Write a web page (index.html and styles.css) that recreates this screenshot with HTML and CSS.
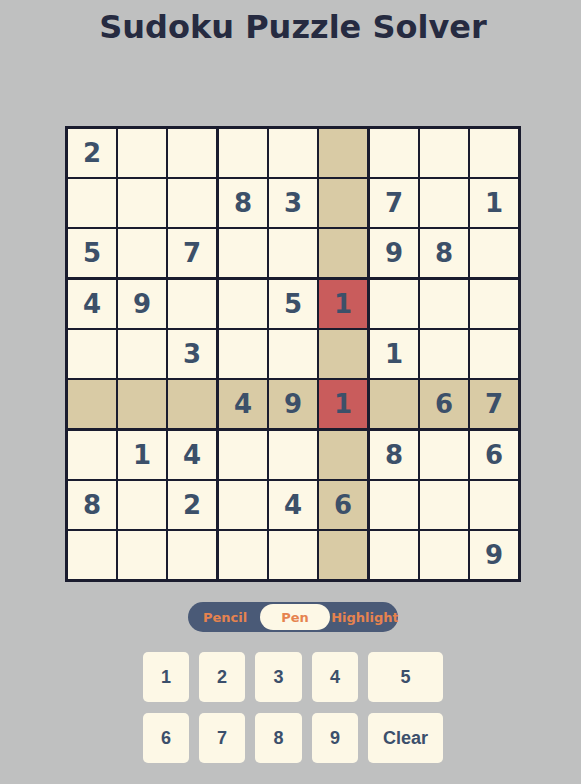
FILE: index.html
```html
<!DOCTYPE html>
<html>
<head>
<meta charset="utf-8">
<link rel="stylesheet" href="styles.css">
</head>
<body>
<div class="page">
  <h1 class="title">Sudoku Puzzle Solver</h1>
  <div class="board">
    <div class="box">
      <div class="cell">2</div><div class="cell"></div><div class="cell"></div>
      <div class="cell"></div><div class="cell"></div><div class="cell"></div>
      <div class="cell">5</div><div class="cell"></div><div class="cell">7</div>
    </div>
    <div class="box">
      <div class="cell"></div><div class="cell"></div><div class="cell hl"></div>
      <div class="cell">8</div><div class="cell">3</div><div class="cell hl"></div>
      <div class="cell"></div><div class="cell"></div><div class="cell hl"></div>
    </div>
    <div class="box">
      <div class="cell"></div><div class="cell"></div><div class="cell"></div>
      <div class="cell">7</div><div class="cell"></div><div class="cell">1</div>
      <div class="cell">9</div><div class="cell">8</div><div class="cell"></div>
    </div>
    <div class="box">
      <div class="cell">4</div><div class="cell">9</div><div class="cell"></div>
      <div class="cell"></div><div class="cell"></div><div class="cell">3</div>
      <div class="cell hl"></div><div class="cell hl"></div><div class="cell hl"></div>
    </div>
    <div class="box">
      <div class="cell"></div><div class="cell">5</div><div class="cell err">1</div>
      <div class="cell"></div><div class="cell"></div><div class="cell hl"></div>
      <div class="cell hl">4</div><div class="cell hl">9</div><div class="cell err">1</div>
    </div>
    <div class="box">
      <div class="cell"></div><div class="cell"></div><div class="cell"></div>
      <div class="cell">1</div><div class="cell"></div><div class="cell"></div>
      <div class="cell hl"></div><div class="cell hl">6</div><div class="cell hl">7</div>
    </div>
    <div class="box">
      <div class="cell"></div><div class="cell">1</div><div class="cell">4</div>
      <div class="cell">8</div><div class="cell"></div><div class="cell">2</div>
      <div class="cell"></div><div class="cell"></div><div class="cell"></div>
    </div>
    <div class="box">
      <div class="cell"></div><div class="cell"></div><div class="cell hl"></div>
      <div class="cell"></div><div class="cell">4</div><div class="cell hl">6</div>
      <div class="cell"></div><div class="cell"></div><div class="cell hl"></div>
    </div>
    <div class="box">
      <div class="cell">8</div><div class="cell"></div><div class="cell">6</div>
      <div class="cell"></div><div class="cell"></div><div class="cell"></div>
      <div class="cell"></div><div class="cell"></div><div class="cell">9</div>
    </div>
  </div>
  <div class="modes">
    <span class="mode">Pencil</span>
    <span class="mode active">Pen</span>
    <span class="mode">Highlight</span>
  </div>
  <div class="pad">
    <button class="key">1</button>
    <button class="key">2</button>
    <button class="key">3</button>
    <button class="key">4</button>
    <button class="key">5</button>
    <button class="key">6</button>
    <button class="key">7</button>
    <button class="key">8</button>
    <button class="key">9</button>
    <button class="key">Clear</button>
  </div>
</div>
</body>
</html>
```
FILE: styles.css
```css
html, body {
  margin: 0;
  padding: 0;
  background: #bfc0c0;
}
.page {
  width: 581px;
  box-sizing: border-box;
  padding-left: 5px;
  display: flex;
  flex-direction: column;
  align-items: center;
}
.title {
  margin: 7px 0 0;
  font-family: "DejaVu Sans", Verdana, sans-serif;
  font-weight: bold;
  font-size: 32px;
  line-height: 40px;
  color: #262b41;
}
.board {
  margin-top: 79px;
  display: grid;
  grid-template-columns: repeat(3, 148px);
  gap: 3px;
  padding: 3px;
  background: #1a1c2e;
}
.box {
  display: grid;
  grid-template-columns: repeat(3, 48px);
  grid-auto-rows: 48px;
  gap: 2px;
}
.cell {
  background: #fdf8e6;
  display: flex;
  align-items: center;
  justify-content: center;
  font-family: "DejaVu Sans", Verdana, sans-serif;
  font-weight: bold;
  font-size: 26px;
  color: #3c5069;
}
.cell.hl { background: #d9cba5; }
.cell.err { background: #c95c5c; }
.modes {
  margin-top: 20px;
  display: flex;
  align-items: center;
  width: 210px;
  height: 30px;
  box-sizing: border-box;
  padding: 2px;
  border-radius: 15px;
  background: #4a5a77;
}
.mode {
  flex: 0 0 70px;
  height: 26px;
  display: flex;
  align-items: center;
  justify-content: center;
  border-radius: 13px;
  font-family: "DejaVu Sans", Verdana, sans-serif;
  font-weight: bold;
  font-size: 13px;
  color: #e6834f;
  white-space: nowrap;
}
.mode.active { background: #fdf8e6; }
.pad {
  margin-top: 20px;
  display: grid;
  grid-template-columns: 46px 46px 47px 46px 75px;
  grid-auto-rows: 50px;
  gap: 11px 10px;
}
.key {
  border: none;
  border-radius: 5px;
  background: #fdf8e6;
  font-family: "Liberation Sans", Arial, sans-serif;
  font-weight: bold;
  font-size: 18px;
  color: #3b4f6b;
  padding: 0;
}
```
